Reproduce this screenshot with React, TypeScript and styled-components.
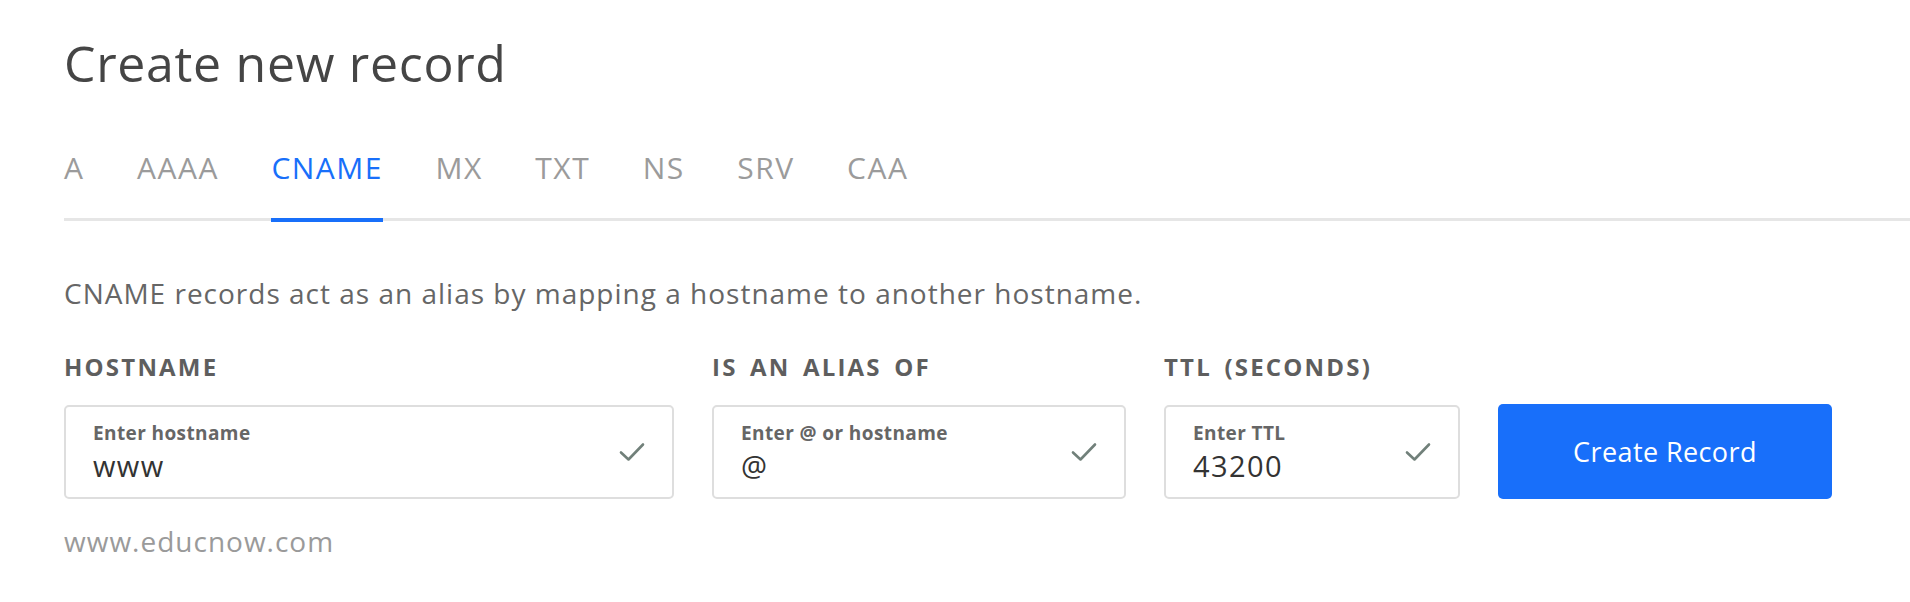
import React from "react";
import styled, { createGlobalStyle } from "styled-components";

const Global = createGlobalStyle`
  html, body { margin: 0; padding: 0; background: #fff; }
  body { font-family: "Open Sans", Lato, sans-serif; -webkit-font-smoothing: antialiased; }
`;

const Page = styled.div`
  padding: 33px 0 0 64px;
  width: 1910px;
  box-sizing: border-box;
`;

const Title = styled.h1`
  margin: 0;
  font-size: 50px;
  line-height: 60px;
  font-weight: 400;
  letter-spacing: 0.7px;
  color: #454545;
`;

const TabBar = styled.div`
  display: flex;
  gap: 52.5px;
  margin-top: 57px;
  border-bottom: 3px solid #e6e6e6;
`;

const Tab = styled.div<{ $active?: boolean }>`
  font-size: 30px;
  line-height: 36px;
  letter-spacing: 1.5px;
  padding-bottom: 32px;
  margin-bottom: -4px;
  border-bottom: 4px solid ${(p) => (p.$active ? "#186ffa" : "transparent")};
  color: ${(p) => (p.$active ? "#186ffa" : "#9b9b9b")};
`;

const Description = styled.p`
  margin: 54px 0 0;
  font-size: 28px;
  line-height: 36px;
  letter-spacing: 1px;
  color: #666;
`;

const Form = styled.div`
  display: grid;
  grid-template-columns: 610px 414px 296px 334px;
  column-gap: 38px;
  align-items: end;
  margin-top: 42px;
`;

const Field = styled.div`
  display: flex;
  flex-direction: column;
  gap: 24px;
`;

const FieldLabel = styled.div`
  font-size: 24px;
  line-height: 28px;
  font-weight: 700;
  letter-spacing: 2.2px;
  word-spacing: 4px;
  color: #5e5e5e;
  text-transform: uppercase;
`;

const Box = styled.div`
  height: 94px;
  box-sizing: border-box;
  border: 2px solid #dedede;
  border-radius: 5px;
  display: flex;
  align-items: center;
  padding: 0 27px 0 27px;
`;

const BoxText = styled.div`
  flex: 1;
  display: flex;
  flex-direction: column;
  gap: 5px;
  margin-top: 1px;
`;

const InnerLabel = styled.div`
  font-size: 19px;
  line-height: 22px;
  font-weight: 700;
  letter-spacing: 0.4px;
  color: #666;
`;

const Value = styled.div`
  font-size: 29px;
  line-height: 34px;
  letter-spacing: 1.4px;
  color: #333;
`;

const Check = styled.svg`
  width: 26px;
  height: 20px;
  flex: none;
`;

const Button = styled.button`
  height: 95px;
  border: none;
  border-radius: 5px;
  background: #186ffa;
  color: #fff;
  font-family: "Open Sans", Lato, sans-serif;
  font-size: 27px;
  font-weight: 500;
  letter-spacing: 0.4px;
  cursor: pointer;
`;

const Helper = styled.div`
  margin-top: 24px;
  font-size: 28px;
  line-height: 36px;
  letter-spacing: 1px;
  color: #9a9a9a;
`;

const CheckIcon = () => (
  <Check viewBox="0 0 26 20">
    <path d="M2 10.5 L9.5 17.5 L24 2.5" fill="none" stroke="#71807a" strokeWidth="2.6" strokeLinecap="round" strokeLinejoin="round" />
  </Check>
);

const tabs = ["A", "AAAA", "CNAME", "MX", "TXT", "NS", "SRV", "CAA"];

const fields = [
  { label: "Hostname", placeholder: "Enter hostname", value: "www" },
  { label: "Is an alias of", placeholder: "Enter @ or hostname", value: "@" },
  { label: "TTL (seconds)", placeholder: "Enter TTL", value: "43200" },
];

export default function App() {
  return (
    <>
      <Global />
      <Page>
        <Title>Create new record</Title>
        <TabBar>
          {tabs.map((t) => (
            <Tab key={t} $active={t === "CNAME"}>
              {t}
            </Tab>
          ))}
        </TabBar>
        <Description>CNAME records act as an alias by mapping a hostname to another hostname.</Description>
        <Form>
          {fields.map((f) => (
            <Field key={f.label}>
              <FieldLabel>{f.label}</FieldLabel>
              <Box>
                <BoxText>
                  <InnerLabel>{f.placeholder}</InnerLabel>
                  <Value>{f.value}</Value>
                </BoxText>
                <CheckIcon />
              </Box>
            </Field>
          ))}
          <Button>Create Record</Button>
        </Form>
        <Helper>www.educnow.com</Helper>
      </Page>
    </>
  );
}
